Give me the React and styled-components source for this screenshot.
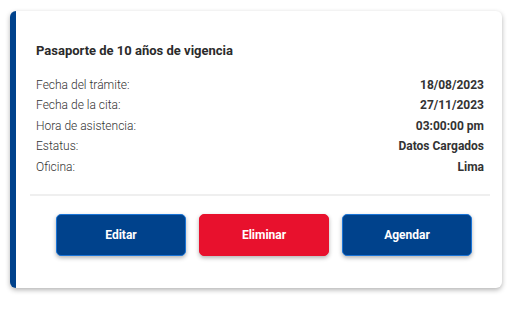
import React from "react";
import styled, { createGlobalStyle } from "styled-components";

const Global = createGlobalStyle`
  html, body { margin: 0; padding: 0; background: #fff; }
  body { font-family: Roboto, "Liberation Sans", sans-serif; }
`;

const Page = styled.div`
  padding: 11px 12px 20px 10px;
`;

const Card = styled.div`
  background: #fff;
  border-left: 6px solid #00428c;
  border-radius: 6px;
  box-shadow: 0 2px 5px rgba(0, 0, 0, 0.3);
  height: 277px;
  box-sizing: border-box;
  padding: 32px 12px 0 14px;
`;

const Body = styled.div`
  padding: 0 6px 0 6px;
`;

const Title = styled.h2`
  margin: 0 0 19px;
  font-size: 13px;
  font-weight: 700;
  color: #2b2b2b;
  line-height: 16px;
`;

const Rows = styled.div`
  display: flex;
  flex-direction: column;
  gap: 5.4px;
`;

const Row = styled.div`
  display: flex;
  justify-content: space-between;
  font-size: 12px;
  line-height: 15px;
  color: #333;
`;

const Label = styled.span`
  font-weight: 300;
`;

const Value = styled.span`
  font-weight: 700;
`;

const Divider = styled.hr`
  border: none;
  border-top: 2px solid #efefef;
  margin: 19px 0 0;
`;

const Actions = styled.div`
  display: flex;
  justify-content: center;
  gap: 13px;
  padding: 18px 0 0 8px;
`;

const Button = styled.button`
  width: 130px;
  height: 42px;
  border-radius: 5px;
  border: 1px solid ${(p) => (p.$danger ? "#e8112d" : "#1b74d6")};
  background: ${(p) => (p.$danger ? "#e8112d" : "#00428c")};
  color: #fff;
  font-family: Roboto, "Liberation Sans", sans-serif;
  font-size: 12px;
  font-weight: 700;
  box-shadow: 0 2px 4px rgba(0, 0, 0, 0.3);
  cursor: pointer;
`;

const rows = [
  ["Fecha del trámite:", "18/08/2023"],
  ["Fecha de la cita:", "27/11/2023"],
  ["Hora de asistencia:", "03:00:00 pm"],
  ["Estatus:", "Datos Cargados"],
  ["Oficina:", "Lima"],
];

export default function App() {
  return (
    <>
      <Global />
      <Page>
        <Card>
          <Body>
            <Title>Pasaporte de 10 años de vigencia</Title>
            <Rows>
              {rows.map(([l, v]) => (
                <Row key={l}>
                  <Label>{l}</Label>
                  <Value>{v}</Value>
                </Row>
              ))}
            </Rows>
          </Body>
          <Divider />
          <Actions>
            <Button>Editar</Button>
            <Button $danger>Eliminar</Button>
            <Button>Agendar</Button>
          </Actions>
        </Card>
      </Page>
    </>
  );
}
